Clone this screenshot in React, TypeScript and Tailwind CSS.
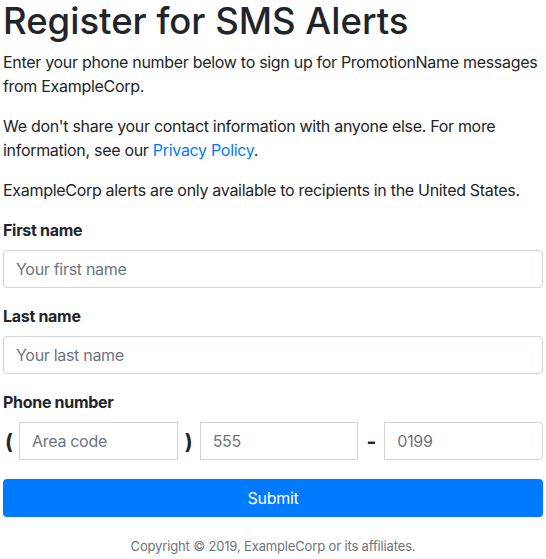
import React from "react";

export default function App() {
  const inputCls =
    "h-[38px] w-full border border-[#ced4da] bg-white px-3 text-base tracking-[-0.3px] text-[#495057] placeholder:text-[#6c757d] outline-none";
  return (
    <div className="px-[3px] font-['Inter','Liberation_Sans',sans-serif] text-[#212529] bg-white min-h-[559px]">
      <h1 className="text-[36.5px] leading-[42px] font-medium mb-2">Register for SMS Alerts</h1>
      <p className="text-base leading-6 mb-4 tracking-[-0.3px]">
        Enter your phone number below to sign up for PromotionName messages from ExampleCorp.
      </p>
      <p className="text-base leading-6 mb-4 tracking-[-0.3px]">
        We don't share your contact information with anyone else. For more information, see our{" "}
        <a href="#" className="text-[#007bff]">Privacy Policy</a>.
      </p>
      <p className="text-base leading-6 mb-4 tracking-[-0.3px]">
        ExampleCorp alerts are only available to recipients in the United States.
      </p>
      <form onSubmit={(e) => e.preventDefault()}>
        <div className="mb-4">
          <label className="block font-bold leading-6 mb-2 tracking-[-0.3px]">First name</label>
          <input className={inputCls + " rounded-[4px]"} placeholder="Your first name" />
        </div>
        <div className="mb-4">
          <label className="block font-bold leading-6 mb-2 tracking-[-0.3px]">Last name</label>
          <input className={inputCls + " rounded-[4px]"} placeholder="Your last name" />
        </div>
        <div className="mb-[19px]">
          <label className="block font-bold leading-6 mb-2 tracking-[-0.3px]">Phone number</label>
          <div className="flex items-center">
            <span className="w-[16px] shrink-0 pl-[2px] text-[21px] font-bold leading-none">(</span>
            <input className={inputCls + " min-w-0 flex-1"} placeholder="Area code" />
            <span className="w-[22px] shrink-0 text-center text-[21px] font-bold leading-none">)</span>
            <input className={inputCls + " min-w-0 flex-1"} placeholder="555" />
            <span className="w-[26px] shrink-0 text-center text-[21px] font-bold leading-none">-</span>
            <input className={inputCls + " min-w-0 flex-1 rounded-r-[4px]"} placeholder="0199" />
          </div>
        </div>
        <button
          type="submit"
          className="h-[38px] w-full rounded-[4px] bg-[#007bff] text-base tracking-[-0.3px] text-white"
        >
          Submit
        </button>
      </form>
      <p className="mt-[19px] text-center text-[13px] leading-[20px] tracking-[-0.15px] text-[#6c757d]">
        Copyright © 2019, ExampleCorp or its affiliates.
      </p>
    </div>
  );
}
